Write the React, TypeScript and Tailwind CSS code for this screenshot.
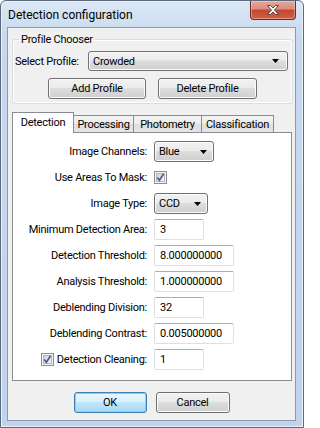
import React from 'react';

// Windows 7 style dialog: "Detection configuration"

const btnFace =
  'bg-[linear-gradient(#f2f2f2,#ebebeb_45%,#dddddd_50%,#cfcfcf)] border border-[#707070] rounded-[3px] shadow-[inset_0_0_0_1px_#fbfbfb]';

const Button: React.FC<{ children: React.ReactNode; className: string }> = ({ children, className }) => (
  <button type="button" className={`h-[21px] flex items-center justify-center ${btnFace} ${className}`}>
    {children}
  </button>
);

const Arrow = () => (
  <svg width="7" height="4" viewBox="0 0 7 4" className="shrink-0">
    <path d="M0 0h7L3.5 4z" fill="#000" />
  </svg>
);

const Combo: React.FC<{ value: string; className: string }> = ({ value, className }) => (
  <div className={`flex items-center justify-between pl-[4px] pr-[6px] ${btnFace} ${className}`}>
    <span>{value}</span>
    <Arrow />
  </div>
);

const TextBox: React.FC<{ value: string; className: string }> = ({ value, className }) => (
  <div
    className={`h-[21px] flex items-center pl-[5px] bg-white border border-[#dbdfe6] border-t-[#abadb3] rounded-[2px] ${className}`}
  >
    {value}
  </div>
);

const CheckBox = () => (
  <svg width="13" height="13" viewBox="0 0 13 13" className="shrink-0">
    <defs>
      <linearGradient id="cbg" x1="0" y1="0" x2="1" y2="1">
        <stop offset="0" stopColor="#cdd1d7" />
        <stop offset="1" stopColor="#f7f7f7" />
      </linearGradient>
    </defs>
    <rect x="0.5" y="0.5" width="12" height="12" fill="#f4f4f4" stroke="#8e8f8f" />
    <rect x="2.5" y="2.5" width="8" height="8" fill="url(#cbg)" stroke="#b4b8be" />
    <path d="M3.3 6.4 L5.4 9.2 L9.6 2.8" fill="none" stroke="#4a5f93" strokeWidth="1.7" />
  </svg>
);

const Row: React.FC<{ label: React.ReactNode; children: React.ReactNode }> = ({ label, children }) => (
  <div className="flex items-center h-[21px]">
    <div className="w-[134px] flex items-center justify-end gap-[3px] whitespace-nowrap">{label}</div>
    <div className="ml-[7px] flex items-center">{children}</div>
  </div>
);

const tabs = [
  { name: 'Processing', w: 'w-[61px]' },
  { name: 'Photometry', w: 'w-[69px]' },
  { name: 'Classification', w: 'w-[73px]' },
];

export default function App() {
  return (
    <div className="w-[304px] h-[428px] bg-white font-['Roboto','Liberation_Sans',sans-serif] text-[11px] tracking-[-0.25px] leading-[15px] text-black">
      <div className="w-full h-full flex flex-col rounded-t-[6px] border border-[#5b6a7c] bg-[linear-gradient(#dbe7f5,#c6d9ee_40px,#bfd4ec)] shadow-[inset_0_0_0_1px_#e8f0fa] pl-[6px] pr-[7px] pb-[6px]">
        {/* title bar */}
        <div className="h-[26px] flex items-start shrink-0">
          <span className="ml-[1px] mt-[7px] text-[12px] tracking-normal">Detection configuration</span>
          <div className="ml-auto w-[46px] h-[19px] rounded-b-[4px] border border-t-0 border-[#6d2a1f] bg-[linear-gradient(#e6a89b,#d88c7d_45%,#c5472f_50%,#d25f41)] shadow-[inset_0_0_0_1px_rgba(255,220,210,0.45)] flex items-center justify-center">
            <svg width="14" height="12" viewBox="0 0 14 12">
              <path
                d="M1.5 1.5h3l2.5 2.6 2.5-2.6h3l-4 4.5 4 4.5h-3l-2.5-2.6-2.5 2.6h-3l4-4.5z"
                fill="#fff"
                stroke="#5a4a48"
                strokeWidth="1"
                strokeLinejoin="round"
              />
            </svg>
          </div>
        </div>

        {/* client area */}
        <div className="flex-1 flex flex-col border border-[#8a9bb0] bg-[#f0f0f0]">
          <fieldset className="ml-[4px] mr-[2px] mt-[4px] border border-[#d5dfe5] rounded-[3px] shadow-[inset_0_0_0_1px_#fff] px-[2px] pb-[4px]">
            <legend className="ml-[4px] px-[2px] leading-[15px]">Profile Chooser</legend>
            <div className="flex items-center mt-[4px]">
              <span className="w-[73px] whitespace-nowrap">Select Profile:</span>
              <Combo value="Crowded" className="h-[20px] w-[200px] pr-[8px]" />
            </div>
            <div className="flex justify-center gap-[12px] mt-[7px]">
              <Button className="w-[98px]">Add Profile</Button>
              <Button className="w-[99px]">Delete Profile</Button>
            </div>
          </fieldset>

          {/* tabs */}
          <div className="flex items-end ml-[4px] mt-[8px] -mb-px">
            <div className="relative z-10 w-[62px] h-[21px] border border-b-0 border-[#898c95] bg-white flex items-start justify-center pt-[2px]">
              Detection
            </div>
            {tabs.map((t) => (
              <div
                key={t.name}
                className={`${t.w} h-[18px] -ml-px border border-b-0 border-[#898c95] bg-[linear-gradient(#f3f3f3,#ebebeb_50%,#dedede_50%,#e6e6e6)] flex items-center justify-center`}
              >
                {t.name}
              </div>
            ))}
          </div>
          <div className="relative ml-[4px] w-[280px] border border-[#898c95] bg-white pt-[8px] pb-[10px] flex flex-col gap-[5px]">
            <Row label="Image Channels:">
              <Combo value="Blue" className="h-[21px] w-[60px]" />
            </Row>
            <Row label="Use Areas To Mask:">
              <CheckBox />
            </Row>
            <Row label="Image Type:">
              <Combo value="CCD" className="h-[21px] w-[54px]" />
            </Row>
            <Row label="Minimum Detection Area:">
              <TextBox value="3" className="w-[50px]" />
            </Row>
            <Row label="Detection Threshold:">
              <TextBox value="8.000000000" className="w-[80px]" />
            </Row>
            <Row label="Analysis Threshold:">
              <TextBox value="1.000000000" className="w-[80px]" />
            </Row>
            <Row label="Deblending Division:">
              <TextBox value="32" className="w-[50px]" />
            </Row>
            <Row label="Deblending Contrast:">
              <TextBox value="0.005000000" className="w-[80px]" />
            </Row>
            <Row
              label={
                <>
                  <CheckBox />
                  <span>Detection Cleaning:</span>
                </>
              }
            >
              <TextBox value="1" className="w-[50px]" />
            </Row>
          </div>

          <div className="flex justify-center gap-[9px] mt-[11px]">
            <button
              type="button"
              className="w-[73px] h-[21px] rounded-[3px] border border-[#3c7fb1] bg-[linear-gradient(#eaf6fd,#d9f0fc_50%,#bee6fd_50%,#a7d9f5)] shadow-[inset_0_0_0_1px_#6fdcfb] flex items-center justify-center"
            >
              OK
            </button>
            <Button className="w-[74px]">Cancel</Button>
          </div>
        </div>
      </div>
    </div>
  );
}
